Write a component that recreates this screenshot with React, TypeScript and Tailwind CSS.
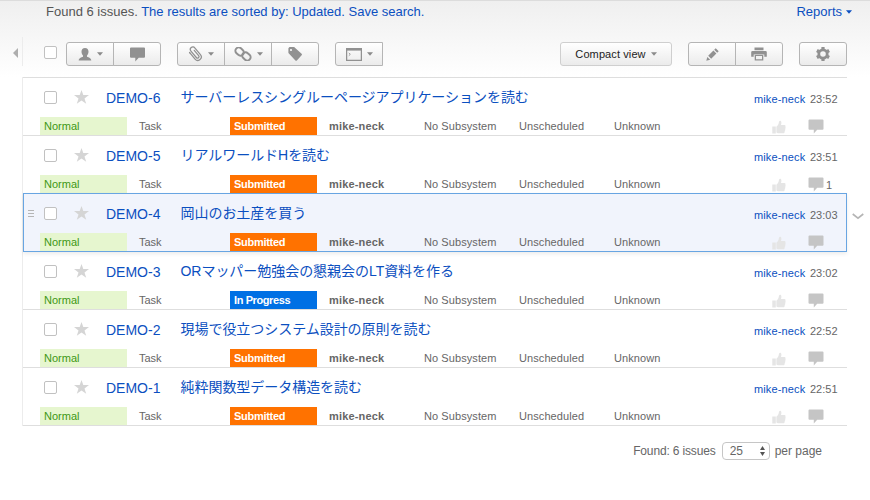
import type { ReactNode } from 'react';

type Issue = {
  id: string;
  title: string;
  time: string;
  state: 'Submitted' | 'In Progress';
  comments?: number;
  selected?: boolean;
};

const issues: Issue[] = [
  { id: 'DEMO-6', title: 'サーバーレスシングルーページアプリケーションを読む', time: '23:52', state: 'Submitted' },
  { id: 'DEMO-5', title: 'リアルワールドHを読む', time: '23:51', state: 'Submitted', comments: 1 },
  { id: 'DEMO-4', title: '岡山のお土産を買う', time: '23:03', state: 'Submitted', selected: true },
  { id: 'DEMO-3', title: 'ORマッパー勉強会の懇親会のLT資料を作る', time: '23:02', state: 'In Progress' },
  { id: 'DEMO-2', title: '現場で役立つシステム設計の原則を読む', time: '22:52', state: 'Submitted' },
  { id: 'DEMO-1', title: '純粋関数型データ構造を読む', time: '22:51', state: 'Submitted' },
];

function Caret({ className = 'text-[#8a8a8a]' }: { className?: string }) {
  return (
    <svg width="6" height="4" viewBox="0 0 6 4" className={className}>
      <path d="M0 .3h6L3 3.800z" fill="currentColor" />
    </svg>
  );
}

function Bubble({ w = 16, h = 15 }: { w?: number; h?: number }) {
  return (
    <svg width={w} height={h} viewBox="0 0 16 15" fill="currentColor">
      <path d="M1.500.5h13a1 1 0 0 1 1 1v8.300a1 1 0 0 1-1 1H9.200L5.800 14.600v-3.800H1.500a1 1 0 0 1-1-1V1.500a1 1 0 0 1 1-1z" />
    </svg>
  );
}

function PersonIcon() {
  return (
    <svg width="14" height="13" viewBox="0 0 14 13" fill="currentColor">
      <path d="M7 0c2.300 0 3.500 1.500 3.500 3.600 0 1.500-.6 3.200-1.500 4v1.100c1.600.7 4.300 1.300 4.300 3.900H.7c0-2.600 2.700-3.200 4.300-3.900V7.600c-.9-.8-1.500-2.500-1.500-4C3.500 1.500 4.700 0 7 0z" />
    </svg>
  );
}

function ClipIcon() {
  return (
    <svg width="15" height="16" viewBox="0 0 15 16" fill="none" stroke="currentColor" strokeWidth="1.250" strokeLinecap="round">
      <g transform="rotate(-40 7.500 8)">
        <path d="M3.900 4.200v7.400a3.500 3.500 0 0 0 7 0V2.800a2.500 2.500 0 0 0-5 0v8.400a1.500 1.500 0 0 0 3 0V4.400" />
        <path d="M3.900 4.200V3" />
      </g>
    </svg>
  );
}

function LinkIcon() {
  return (
    <svg width="18" height="14" viewBox="0 0 18 14" fill="none" stroke="currentColor" strokeWidth="2">
      <rect x="1.100" y="1.300" width="9" height="6.600" rx="3.300" transform="rotate(42 5.600 4.600)" />
      <rect x="7.900" y="6.100" width="9" height="6.600" rx="3.300" transform="rotate(42 12.400 9.400)" />
    </svg>
  );
}

function TagIcon() {
  return (
    <svg width="14" height="14" viewBox="0 0 14 14" fill="currentColor" fillRule="evenodd">
      <path d="M1.500 0h4.600l7.500 6.800c.5.500.5 1 0 1.500l-4.700 5.100c-.5.500-1 .5-1.500 0L.4 6V1.300zM3 1.900a1.100 1.100 0 1 0 0 2.200 1.100 1.100 0 0 0 0-2.200z" />
    </svg>
  );
}

function ConsoleIcon() {
  return (
    <svg width="16" height="13" viewBox="0 0 16 13" fill="none" stroke="currentColor">
      <path d="M.6 1v11.300h14.800V1" strokeWidth="1.300" />
      <path d="M0 1.300h16" strokeWidth="2.600" />
      <path d="M2.800 5l1.500 1.300-1.500 1.400" strokeWidth=".9" />
    </svg>
  );
}

function PencilIcon() {
  return (
    <svg width="13" height="13" viewBox="0 0 13 13" fill="currentColor">
      <path d="M9.700.3l3 3-1.500 1.500-3-3zM7.400 2.600l3 3-5.200 5.200-3-3zM1.300 8.900l2.900 2.900L.3 12.800z" />
    </svg>
  );
}

function PrinterIcon() {
  return (
    <svg width="16" height="14" viewBox="0 0 16 14" fill="currentColor" fillRule="evenodd">
      <path d="M3.500.5h9v2.800h-9zM1.500 4h13A1.300 1.300 0 0 1 15.800 5.300V9.800h-2.500V7.500H2.700v2.300H.2V5.300A1.300 1.300 0 0 1 1.500 4zM3.700 8h8.600v5.500H3.700zm1.300 1v3.200h6V9z" />
    </svg>
  );
}

function GearIcon() {
  return (
    <svg width="14" height="14" viewBox="0 0 14 14" fill="none" stroke="currentColor">
      <circle cx="7" cy="7" r="4.200" strokeWidth="2.800" />
      <path d="M7 0v2M7 12v2M.9 3.500l1.700 1M11.400 9.500l1.700 1M.9 10.500l1.700-1M11.400 4.500l1.700-1" strokeWidth="3.200" />
    </svg>
  );
}

function ThumbIcon() {
  return (
    <svg width="14" height="14" viewBox="0 0 14 14" fill="currentColor">
      <path d="M.3 6.500h3.500v7H.3zM4.400 6.800C6 5.700 6.600 4.200 7 1.800 7.300.4 9.400.5 9.400 2.500c0 1.100-.2 1.800-.5 2.500h3.400c1.300 0 1.600 1.200 1 2 .6.700.4 1.600-.2 2 .4.700.2 1.500-.4 1.900.2 1.200-.5 2.400-1.700 2.400H6.600c-1 0-1.500-.4-2.200-.7z" />
    </svg>
  );
}

function Button({ children, className = '' }: { children: ReactNode; className?: string }) {
  return (
    <button
      className={`flex h-6 shrink-0 items-center justify-center gap-[5px] border border-[#b5b5b5] bg-linear-to-b from-white to-[#ebebeb] text-[#919191] ${className}`}
    >
      {children}
    </button>
  );
}

function Checkbox() {
  return <span className="h-[13px] w-[13px] shrink-0 rounded-[2px] border border-[#c1c1c1] bg-white" />;
}

function IssueRow({ issue }: { issue: Issue }) {
  const frame = issue.selected
    ? '-mt-px h-[59px] border border-[#68a5e2] bg-[#f1f4fc] shadow-[0_2px_4px_rgba(0,0,0,0.08)]'
    : 'h-[58px] border-b border-[#dedede] px-px';
  const stateColor =
    issue.state === 'Submitted' ? 'bg-[#ff7200] tracking-[-0.280px]' : 'bg-[#0070e4] tracking-[-0.400px]';
  return (
    <div className={`relative ${frame}`}>
      <div className="flex h-[39px] items-center">
        <div className="flex w-5 shrink-0 items-center pl-[4px]">
          {issue.selected && (
            <span className="flex flex-col gap-[2px]">
              <i className="h-px w-1.5 bg-[#b5b5b5]" />
              <i className="h-px w-1.5 bg-[#b5b5b5]" />
              <i className="h-px w-1.5 bg-[#b5b5b5]" />
            </span>
          )}
        </div>
        <Checkbox />
        <svg width="15" height="14" viewBox="0 0 15 14" className="mb-[2px] ml-[17px] shrink-0 text-[#d5d5d5]">
          <path d="M7.500 0l1.800 5.100H15l-4.500 3.300 1.700 5.300-4.700-3.300-4.700 3.300 1.700-5.300L0 5.100h5.700z" fill="currentColor" />
        </svg>
        <a className="ml-[17px] w-[74.500px] shrink-0 text-[14px] leading-5 text-[#0b4fc0]">{issue.id}</a>
        <a className="flex-1 pb-px text-[14px] leading-5 tracking-[-0.040px] whitespace-nowrap text-[#0b4fc0]">{issue.title}</a>
        <div className="flex w-[92px] shrink-0 pt-[2px] text-[11px] leading-4">
          <a className="w-14 tracking-[0.130px] text-[#0b4fc0]">mike-neck</a>
          <span className="text-[#666]">{issue.time}</span>
        </div>
      </div>
      <div className="flex h-[18px] items-center gap-2 pl-4 text-[11px] leading-[18px] text-[#666]">
        <span className="w-[87px] bg-[#e6f6cf] pl-1 text-[#409814]">Normal</span>
        <span className="w-[87px] pl-1">Task</span>
        <span className={`w-[87px] pl-1 font-bold text-white ${stateColor}`}>{issue.state}</span>
        <span className="w-[87px] pl-1 font-bold tracking-[0.160px]">mike-neck</span>
        <span className="w-[87px] pl-1 tracking-[0.080px] whitespace-nowrap">No Subsystem</span>
        <span className="w-[87px] pl-1 tracking-[0.080px]">Unscheduled</span>
        <span className="w-[87px] pl-1 tracking-[0.080px]">Unknown</span>
        <span className="ml-[67px] pt-px text-[#e5e5e5]">
          <ThumbIcon />
        </span>
        <span className="ml-[14px] flex items-center gap-[2px] pt-px text-[#c5c5c5]">
          <Bubble />
          {issue.comments && <span className="leading-[14px] text-[#666]">{issue.comments}</span>}
        </span>
      </div>
      {issue.selected && (
        <svg width="12" height="7" viewBox="0 0 12 7" className="absolute top-[19px] -right-[18px]" fill="none" stroke="#b5b5b5" strokeWidth="1.600">
          <path d="M.7 1L6 5.200 11.300 1" />
        </svg>
      )}
    </div>
  );
}

export default function App() {
  return (
    <div className="h-[500px] w-[870px] overflow-hidden bg-white font-['Liberation_Sans','Noto_Sans_CJK_JP',sans-serif]">
      <header className="flex h-[77px] flex-col border-t border-[#dcdcdc] bg-linear-to-b from-[#efefef] to-white">
        <div className="flex h-[22px] items-center justify-between pr-[18px] pl-[46px] text-[13px] text-[#0b4fc0]">
          <p>
            <span className="text-[#555]">Found 6 issues.</span> The results are sorted by: Updated. Save search.
          </p>
          <a className="flex items-center gap-[4px]">
            Reports <Caret className="text-[#0b4fc0]" />
          </a>
        </div>
        <div className="mt-[14px] flex h-10 items-start">
          <svg width="5" height="10" viewBox="0 0 5 10" className="mt-[11px] ml-[13px]" fill="#aeaeae">
            <path d="M5 0v10L0 5z" />
          </svg>
          <div className="ml-1 flex flex-1 items-center border-l border-[#ececec] pt-[5px] pl-[21px]">
            <span className="flex pb-[3px]">
              <Checkbox />
            </span>
            <Button className="ml-[9px] w-12 rounded-l-[3px]"><PersonIcon /><Caret /></Button>
            <Button className="-ml-px w-12 rounded-r-[3px]"><Bubble w={17} /></Button>
            <Button className="ml-4 w-12 rounded-l-[3px]"><ClipIcon /><Caret /></Button>
            <Button className="-ml-px w-12 rounded-none"><LinkIcon /><Caret /></Button>
            <Button className="-ml-px w-12 rounded-r-[3px]"><TagIcon /></Button>
            <Button className="ml-4 w-12 rounded-l-[3px]"><ConsoleIcon /><Caret /></Button>
            <Button className="ml-auto w-28 rounded-[3px] border-[#cfcfcf]">
              <span className="text-[11px] tracking-[0.100px] text-[#222]">Compact view</span><Caret />
            </Button>
            <Button className="ml-4 w-12 rounded-l-[3px]"><PencilIcon /></Button>
            <Button className="-ml-px w-12 rounded-r-[3px]"><PrinterIcon /></Button>
            <Button className="mr-[23px] ml-4 w-12 rounded-[3px]"><GearIcon /></Button>
          </div>
        </div>
      </header>
      <main className="ml-[22px] w-[825px] border-l border-[#ececec]">
        <div className="h-px bg-[#dedede]" />
        {issues.map((issue) => (
          <IssueRow key={issue.id} issue={issue} />
        ))}
      </main>
      <footer className="mt-4 flex h-[18px] items-center justify-end pr-12 text-[12px] text-[#666]">
        <span className="tracking-[-0.150px]">Found: 6 issues</span>
        <span className="mr-[5px] ml-[6px] flex h-[18px] w-12 items-center justify-between rounded-[4px] border border-[#c6c6c6] pr-1 pl-[7px]">
          25
          <svg width="5" height="10" viewBox="0 0 5 10" fill="#555">
            <path d="M2.500 0L5 4H0zM0 6h5l-2.500 4z" />
          </svg>
        </span>
        <span>per page</span>
      </footer>
    </div>
  );
}
